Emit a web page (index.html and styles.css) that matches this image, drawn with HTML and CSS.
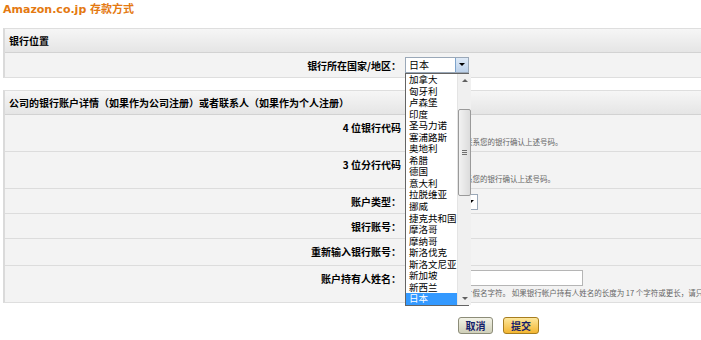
FILE: index.html
```html
<!DOCTYPE html>
<html lang="zh-CN">
<head>
    <meta charset="UTF-8">
    <title>Amazon.co.jp 存款方式</title>
    <link rel="stylesheet" href="styles.css">
</head>
<body>
    <div class="page">
        <h1 class="title">Amazon.co.jp 存款方式</h1>

        <div class="section section-location">
            <div class="section-head">银行位置</div>
            <div class="row row-short">
                <div class="label">银行所在国家/地区：</div>
                <div class="value">
                    <div class="dropdown">
                        <div class="select select-country">
                            <span class="select-text">日本</span>
                            <span class="select-btn active"></span>
                        </div>
                        <div class="dropdown-menu">
                            <ul class="dropdown-list">
                                <li>加拿大</li>
                                <li>匈牙利</li>
                                <li>卢森堡</li>
                                <li>印度</li>
                                <li>圣马力诺</li>
                                <li>塞浦路斯</li>
                                <li>奥地利</li>
                                <li>希腊</li>
                                <li>德国</li>
                                <li>意大利</li>
                                <li>拉脱维亚</li>
                                <li>挪威</li>
                                <li>捷克共和国</li>
                                <li>摩洛哥</li>
                                <li>摩纳哥</li>
                                <li>斯洛伐克</li>
                                <li>斯洛文尼亚</li>
                                <li>新加坡</li>
                                <li>新西兰</li>
                                <li class="selected">日本</li>
                            </ul>
                            <div class="scrollbar">
                                <div class="scroll-arrow scroll-up"></div>
                                <div class="scroll-track">
                                    <div class="scroll-thumb"><span class="grip"></span></div>
                                </div>
                                <div class="scroll-arrow scroll-down"></div>
                            </div>
                        </div>
                    </div>
                </div>
            </div>
        </div>

        <div class="section section-account">
            <div class="section-head">公司的银行账户详情（如果作为公司注册）或者联系人（如果作为个人注册）</div>
            <div class="row row-tall">
                <div class="label">4 位银行代码</div>
                <div class="value">
                    <input class="field field-code" type="text">
                    <div class="hint">若有疑问，请直接联系您的银行确认上述号码。</div>
                </div>
            </div>
            <div class="row row-tall">
                <div class="label">3 位分行代码</div>
                <div class="value">
                    <input class="field field-code" type="text">
                    <div class="hint">如有疑问，请再联系您的银行确认上述号码。</div>
                </div>
            </div>
            <div class="row row-short">
                <div class="label">账户类型：</div>
                <div class="value">
                    <div class="select select-type">
                        <span class="select-text">普通</span>
                        <span class="select-btn"></span>
                    </div>
                </div>
            </div>
            <div class="row row-short">
                <div class="label">银行账号：</div>
                <div class="value">
                    <input class="field field-code" type="text">
                </div>
            </div>
            <div class="row row-mid">
                <div class="label">重新输入银行账号：</div>
                <div class="value">
                    <input class="field field-code" type="text">
                </div>
            </div>
            <div class="row row-tall">
                <div class="label">账户持有人姓名：</div>
                <div class="value value-name">
                    <input class="field field-name" type="text">
                    <div class="hint">请输入全角或半角片假名字符。 如果银行帐户持有人姓名的长度为 17 个字符或更长，请只输入前 16 个字符。</div>
                </div>
            </div>
        </div>

        <div class="actions">
            <button class="btn btn-cancel">取消</button>
            <button class="btn btn-submit">提交</button>
        </div>
    </div>
</body>
</html>
```

FILE: styles.css
```css
body {
    margin: 0;
    padding: 0;
    background-color: #fff;
    font-family: "DejaVu Sans", "Noto Sans CJK SC", sans-serif;
    color: #000;
    overflow: hidden;
}

.page {
    width: 770px;
    padding: 3px 0 0 3px;
}

.title {
    margin: 0;
    height: 25px;
    font-size: 11px;
    line-height: 14px;
    font-weight: bold;
    color: #e47911;
}

.section {
    border: 1px solid #dedede;
    border-left: 2px solid #dadada;
    background-color: #f3f3f3;
}

.section-location {
    margin-bottom: 12px;
}

.section-head {
    height: 23px;
    padding-left: 4px;
    font-family: "Noto Sans CJK SC", sans-serif;
    font-size: 10px;
    font-weight: bold;
    line-height: 23px;
    background: linear-gradient(#f6f6f6, #e5e5e5);
    border-bottom: 1px solid #d2d2d2;
}

.row {
    display: grid;
    grid-template-columns: 396px 1fr;
    border-bottom: 1px solid #dcdcdc;
    font-family: "Noto Sans CJK SC", sans-serif;
}

.row:last-child {
    border-bottom: none;
}

.row-short {
    height: 24px;
}

.row-mid {
    height: 26px;
}

.row-tall {
    height: 36px;
}

.label {
    padding: 7px 0 0 0;
    text-align: right;
    font-size: 10px;
    font-weight: bold;
    line-height: 12px;
}

.value {
    padding: 4px 0 0 4px;
    position: relative;
}

.field {
    display: block;
    box-sizing: border-box;
    height: 16px;
    margin: 0;
    padding: 0 2px;
    border: 1px solid #b5b5b5;
    background: #fff;
    font-size: 10px;
}

.field-code {
    width: 60px;
}

.field-name {
    width: 178px;
}

.hint {
    margin-top: 2px;
    font-size: 7.5px;
    line-height: 10px;
    color: #666;
    white-space: nowrap;
}

.select {
    display: flex;
    box-sizing: border-box;
    height: 16px;
    border: 1px solid #9aa8b8;
    background: #fff;
    font-size: 10px;
    line-height: 14px;
}

.select-country {
    width: 64px;
}

.select-type {
    width: 73px;
    margin-top: 1px;
}

.select-text {
    flex: 1;
    padding-left: 3px;
}

.select-btn {
    position: relative;
    width: 12px;
    border-left: 1px solid #c8d4e2;
    background: #fff;
}

.select-btn.active {
    background: linear-gradient(#dfeaf7, #bcd1ea);
    border-left-color: #7ea4cc;
}

.select-btn::after {
    content: "";
    position: absolute;
    left: 3px;
    top: 5px;
    border-left: 3px solid transparent;
    border-right: 3px solid transparent;
    border-top: 3px solid #000;
}

.dropdown {
    position: relative;
    width: 64px;
}

.dropdown-menu {
    position: absolute;
    top: 16px;
    left: 0;
    z-index: 5;
    display: flex;
    box-sizing: border-box;
    width: 64px;
    height: 233px;
    border: 1px solid #646464;
    background: #fff;
}

.dropdown-list {
    flex: 1;
    margin: 0;
    padding: 0;
    list-style: none;
    font-size: 9.5px;
}

.dropdown-list li {
    height: 11.55px;
    padding-left: 3px;
    line-height: 11.55px;
    white-space: nowrap;
}

.dropdown-list li.selected {
    background-color: #3399ff;
    color: #fff;
}

.scrollbar {
    display: flex;
    flex-direction: column;
    width: 14px;
    background: #f0f0f0;
    border-left: 1px solid #e4e4e4;
}

.scroll-arrow {
    position: relative;
    height: 14px;
}

.scroll-arrow::after {
    content: "";
    position: absolute;
    left: 4px;
    border-left: 3px solid transparent;
    border-right: 3px solid transparent;
}

.scroll-up::after {
    top: 5px;
    border-bottom: 3px solid #606060;
}

.scroll-down::after {
    top: 6px;
    border-top: 3px solid #606060;
}

.scroll-track {
    flex: 1;
    padding-top: 21px;
}

.scroll-thumb {
    display: flex;
    align-items: center;
    justify-content: center;
    box-sizing: border-box;
    width: 13px;
    height: 87px;
    border: 1px solid #9a9a9a;
    border-radius: 2px;
    background: linear-gradient(90deg, #f2f2f2, #dcdcdc);
}

.grip {
    width: 5px;
    height: 5px;
    background: repeating-linear-gradient(#707070 0, #707070 1px, transparent 1px, transparent 2px);
}

.actions {
    display: flex;
    gap: 10px;
    padding: 14px 0 0 455px;
}

.btn {
    height: 17px;
    padding: 0 6px;
    border-radius: 3px;
    font-family: "Noto Sans CJK SC", sans-serif;
    font-size: 10px;
    font-weight: bold;
    line-height: 15px;
    color: #14206a;
    cursor: pointer;
}

.btn-cancel {
    width: 35px;
    border: 1px solid #8c8c78;
    background: linear-gradient(#f2f2e6, #cfcfb8);
}

.btn-submit {
    width: 36px;
    border: 1px solid #a77d1f;
    background: linear-gradient(#fde79c, #f3b631);
}
```
